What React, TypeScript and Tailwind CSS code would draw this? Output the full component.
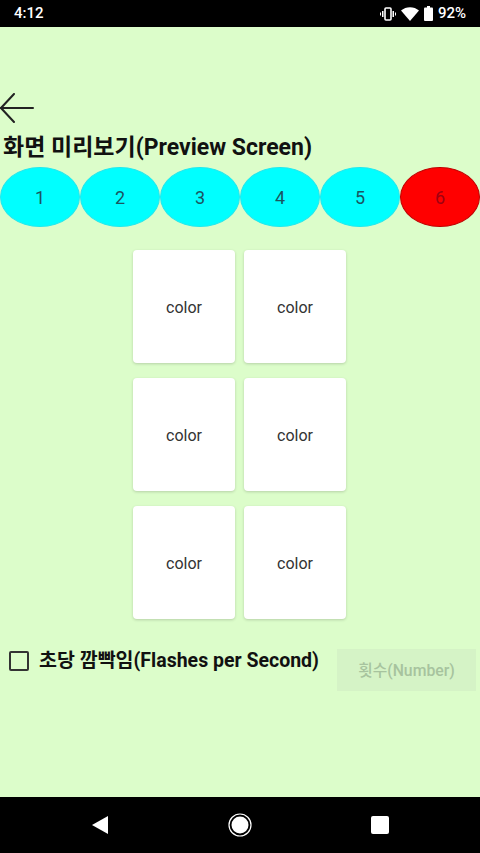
import React from "react";

const font = { fontFamily: 'Roboto, "Noto Sans CJK KR", sans-serif' };

function StatusBar() {
  return (
    <div className="h-[27px] bg-black flex items-center justify-between px-[14px] text-white text-[15px]">
      <span className="font-medium">4:12</span>
      <div className="flex items-center gap-[5px]">
        <svg width="16" height="14" viewBox="0 0 16 14" fill="white">
          <rect x="5" y="1" width="6" height="12" rx="1" fill="none" stroke="white" strokeWidth="1.6" />
          <rect x="2" y="4" width="1.5" height="6" />
          <rect x="12.5" y="4" width="1.5" height="6" />
          <rect x="0" y="5.5" width="1" height="3" />
          <rect x="15" y="5.5" width="1" height="3" />
        </svg>
        <svg width="18" height="14" viewBox="0 0 18 14" fill="white">
          <path d="M0 3.5 C5 -1 13 -1 18 3.5 L9 14 Z" />
        </svg>
        <svg width="9" height="15" viewBox="0 0 9 15" fill="white">
          <rect x="3" y="0" width="3" height="2" />
          <rect x="0" y="1.5" width="9" height="13.5" rx="1" />
        </svg>
        <span className="font-medium">92%</span>
      </div>
    </div>
  );
}

function NavBar() {
  return (
    <div className="h-[56px] bg-black flex items-center justify-between px-[91px]">
      <svg width="18" height="20" viewBox="0 0 18 20">
        <path d="M17 1 L17 19 L1 10 Z" fill="white" />
      </svg>
      <svg width="24" height="24" viewBox="0 0 24 24">
        <circle cx="12" cy="12" r="11" fill="none" stroke="white" strokeWidth="1.2" />
        <circle cx="12" cy="12" r="8.5" fill="white" />
      </svg>
      <div className="w-[18px] h-[18px] bg-white rounded-[2px]" />
    </div>
  );
}

function Card() {
  return (
    <div className="w-[102px] h-[113px] bg-white rounded-[4px] shadow-[0_1px_3px_rgba(0,0,0,0.18)] flex items-center justify-center text-[16px] text-[#333] pt-[2px]">
      color
    </div>
  );
}

export default function App() {
  const nums = [1, 2, 3, 4, 5];
  return (
    <div className="w-[480px] h-[853px] flex flex-col bg-[#dcfdca]" style={font}>
      <StatusBar />
      <div className="flex-1 flex flex-col">
        <div className="pt-[66px] pl-0 h-[95px]">
          <svg width="34" height="30" viewBox="0 0 34 30" fill="none" stroke="#222" strokeWidth="2" strokeLinecap="round">
            <path d="M1 15 L33 15" />
            <path d="M14 1 L1 15 L14 29" />
          </svg>
        </div>
        <h1 className="text-[23px] font-bold text-[#111] leading-[28px] pl-[3px] mt-[12px]">
          화면 미리보기(Preview Screen)
        </h1>
        <div className="flex mt-[5px]">
          {nums.map((n) => (
            <div
              key={n}
              className="w-[80px] h-[60px] rounded-[50%] bg-[#00ffff] border border-[#22e8ee] flex items-center justify-center text-[18px] text-[#1b5560]"
            >
              {n}
            </div>
          ))}
          <div className="w-[80px] h-[60px] rounded-[50%] bg-[#ff0000] border-[1.5px] border-[#c00000] flex items-center justify-center text-[18px] text-[#a00010]">
            6
          </div>
        </div>
        <div className="mt-[23px] flex justify-center">
          <div className="grid grid-cols-2 gap-x-[9px] gap-y-[15px] mr-[1px]">
            <Card />
            <Card />
            <Card />
            <Card />
            <Card />
            <Card />
          </div>
        </div>
        <div className="mt-[30px] flex items-start">
          <div className="flex items-center pl-[9px] pt-[0px]">
            <div className="w-[20px] h-[20px] border-2 border-[#333] rounded-[2px]" />
            <span className="ml-[10px] text-[19.5px] font-bold text-[#111] leading-[24px]">
              초당 깜빡임(Flashes per Second)
            </span>
          </div>
          <div className="ml-auto mr-[4px] w-[139px] h-[42px] bg-[#d5f3c6] flex items-center justify-center text-[15.8px] font-medium text-[#a7c39e] pt-[2px]">
            횟수(Number)
          </div>
        </div>
      </div>
      <NavBar />
    </div>
  );
}
